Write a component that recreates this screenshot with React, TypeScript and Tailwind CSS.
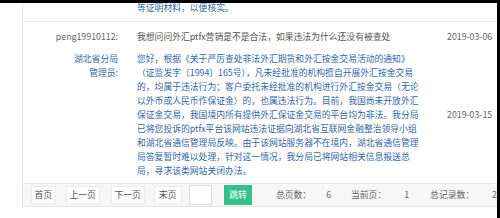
import React from 'react';

const answerLines = [
  '您好，根据《关于严厉查处非法外汇期货和外汇按金交易活动的通知》',
  '（证监发字〔1994〕165号），凡未经批准的机构擅自开展外汇按金交易',
  '的，均属于违法行为；客户委托未经批准的机构进行外汇按金交易（无论',
  '以外币或人民币作保证金）的，也属违法行为。目前，我国尚未开放外汇',
  '保证金交易，我国境内所有提供外汇保证金交易的平台均为非法。我分局',
  '已将您投诉的ptfx平台该网站违法证据向湖北省互联网金融整治领导小组',
  '和湖北省通信管理局反映。由于该网站服务器不在境内，湖北省通信管理',
  '局答复暂时难以处理，针对这一情况，我分局已将网站相关信息报送总',
  '局，寻求该类网站关闭办法。',
];

const font = { fontFamily: '"Noto Sans CJK SC", "Noto Sans", sans-serif' };

function PageButton({ label, width }: { label: string; width: string }) {
  return (
    <div className={`${width} h-[18px] flex items-center justify-center bg-white border border-[#ececec] text-[#555]`}>
      {label}
    </div>
  );
}

export default function App() {
  return (
    <div className="w-[500px] h-[218px] bg-black pt-[3px] pr-[3px] overflow-hidden" style={font}>
      <div className="h-[215px] bg-white flex overflow-hidden text-[8.8px] leading-[14px]">
        <div className="w-[22px] shrink-0" />
        <div className="w-[475px] h-[204px] flex flex-col border-l border-[#e6e6e6]">
          {/* tail of previous answer */}
          <div className="h-[19px] border-b border-[#e6e6e6] flex">
            <div className="w-[114px] shrink-0" />
            <div className="-mt-[2px] text-[#3567a8] whitespace-nowrap">等证明材料，以便核实。</div>
          </div>

          <div className="flex pt-[8px]">
            <div className="w-[95px] shrink-0 text-right text-[#666]">peng19910112:</div>
            <div className="w-[310px] shrink-0 ml-[19px] text-[#555] whitespace-nowrap">
              我想问问外汇ptfx营销是不是合法，如果违法为什么还没有被查处
            </div>
            <div className="text-[#666] whitespace-nowrap">2019-03-06</div>
          </div>

          <div className="flex pt-[8px] pb-[5px]">
            <div className="w-[95px] shrink-0 text-right text-[#3567a8]">
              <div>湖北省分局</div>
              <div>管理员:</div>
            </div>
            <div className="w-[310px] shrink-0 ml-[19px] text-[#3567a8] whitespace-nowrap">
              {answerLines.map((line) => (
                <div key={line}>{line}</div>
              ))}
            </div>
            <div className="self-center text-[#666] whitespace-nowrap">2019-03-15</div>
          </div>

          <div className="h-[24px] flex items-center bg-[#f7f7f7] border-y border-[#e6e6e6] pl-[8px] whitespace-nowrap">
            <PageButton label="首页" width="w-[25px]" />
            <div className="ml-[10px]"><PageButton label="上一页" width="w-[34px]" /></div>
            <div className="ml-[11px]"><PageButton label="下一页" width="w-[34px]" /></div>
            <div className="ml-[9px]"><PageButton label="末页" width="w-[28px]" /></div>
            <div className="ml-[7px] w-[24px] h-[20px] bg-white border border-[#dcdcdc]" />
            <div className="ml-[12px] w-[28px] h-[20px] bg-[#36c08e] text-white flex items-center justify-center">跳转</div>
            <span className="ml-[24px] text-[#666]">总页数：</span>
            <span className="ml-[15px] text-[#666]">6</span>
            <span className="ml-[20px] text-[#666]">当前页：</span>
            <span className="ml-[18px] text-[#666]">1</span>
            <span className="ml-[21px] text-[#666]">总记录数：</span>
            <span className="ml-[18px] text-[#666]">2</span>
          </div>
        </div>
      </div>
    </div>
  );
}
